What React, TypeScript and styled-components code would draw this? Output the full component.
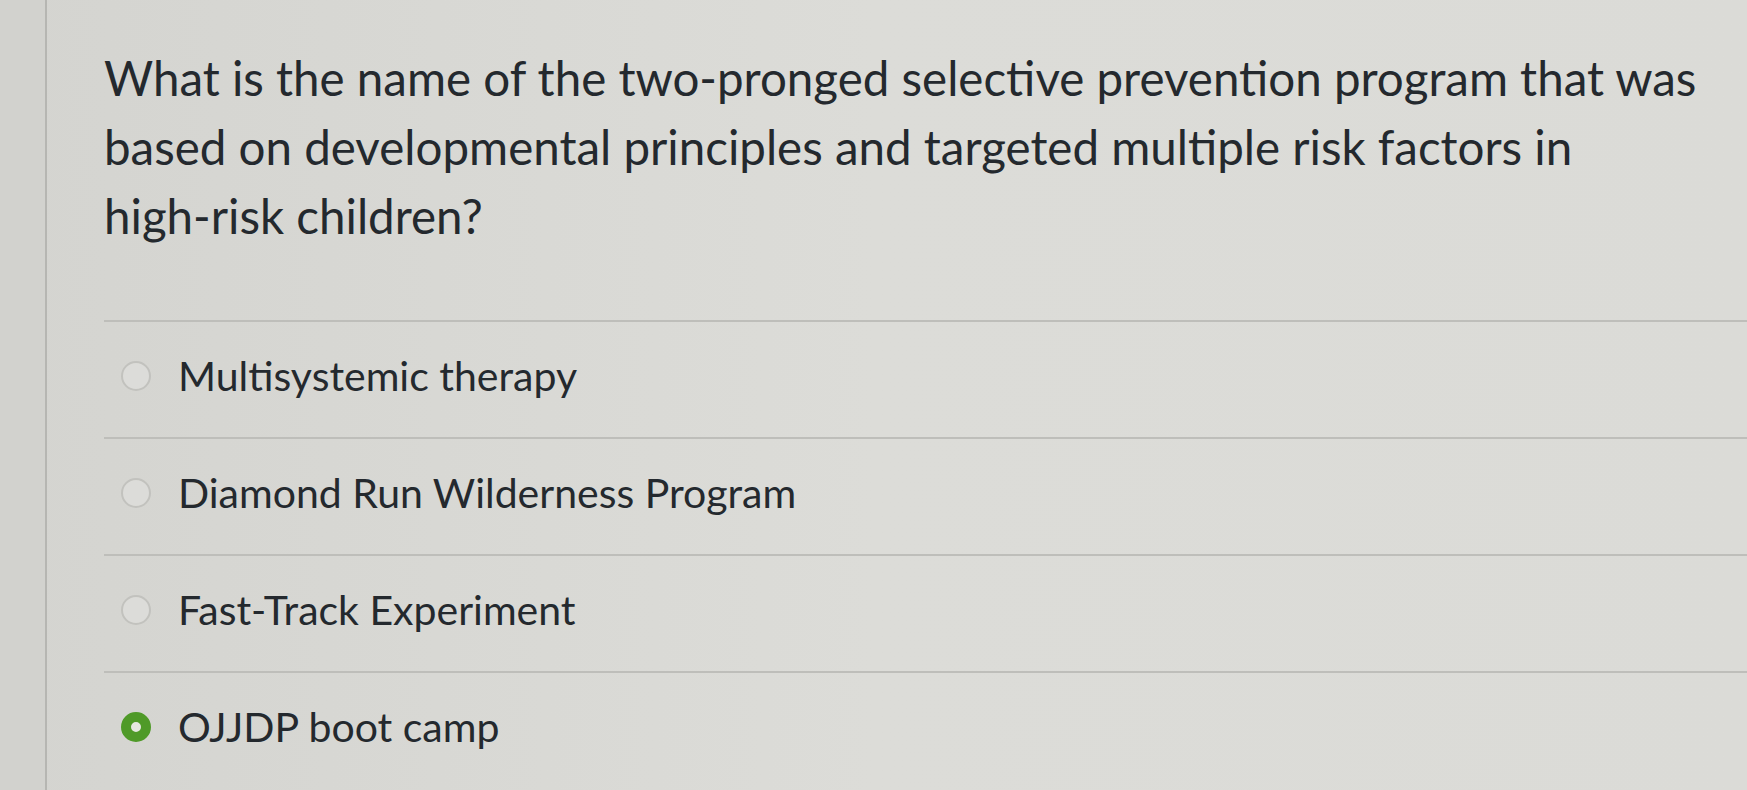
import * as React from "react";
import styled, { createGlobalStyle } from "styled-components";

const GlobalStyle = createGlobalStyle`
  html, body {
    margin: 0;
    padding: 0;
    background: #d6d6d2;
  }
  body {
    font-family: Lato, "Open Sans", sans-serif;
  }
`;

const answers = [
  { label: "Multisystemic therapy", selected: false },
  { label: "Diamond Run Wilderness Program", selected: false },
  { label: "Fast-Track Experiment", selected: false },
  { label: "OJJDP boot camp", selected: true }
];

const Page = styled.div`
  display: flex;
  width: 1747px;
  height: 790px;
  overflow: hidden;
  background: linear-gradient(90deg, #d4d4d0 0%, #dcdcd8 50%, #dbdbd7 100%);
`;

const Gutter = styled.div`
  width: 45px;
  flex-shrink: 0;
  border-right: 2px solid #b6b6b2;
  background: #d2d2ce;
`;

const Question = styled.div`
  flex: 1;
  padding: 43px 10px 0 57px;
`;

const Prompt = styled.p`
  margin: 0 0 70px;
  max-width: 1620px;
  font-size: 47.5px;
  line-height: 69px;
  color: #24292e;
`;

const AnswerList = styled.div`
  display: flex;
  flex-direction: column;
  margin-right: -10px;
`;

const AnswerRow = styled.label`
  display: flex;
  align-items: center;
  height: 117px;
  border-top: 2px solid #bebeba;
  box-sizing: border-box;
  padding: 0 0 8px 17px;
`;

const Radio = styled.span<{ $selected: boolean }>`
  width: 30px;
  height: 30px;
  border-radius: 50%;
  box-sizing: border-box;
  flex-shrink: 0;
  border: ${p => (p.$selected ? "10px solid #4f9a28" : "2px solid #c2c2be")};
  background: ${p => (p.$selected ? "#e6e8e1" : "#dcdcd9")};
`;

const AnswerText = styled.span`
  margin-left: 27px;
  font-size: 41px;
  color: #24292e;
`;

export default function App() {
  return (
    <>
      <GlobalStyle />
      <Page>
        <Gutter />
        <Question>
          <Prompt>
            What is the name of the two-pronged selective prevention program that was
            <br />
            based on developmental principles and targeted multiple risk factors in
            <br />
            high-risk children?
          </Prompt>
          <AnswerList>
            {answers.map(a => (
              <AnswerRow key={a.label}>
                <Radio $selected={a.selected} />
                <AnswerText>{a.label}</AnswerText>
              </AnswerRow>
            ))}
          </AnswerList>
        </Question>
      </Page>
    </>
  );
}
